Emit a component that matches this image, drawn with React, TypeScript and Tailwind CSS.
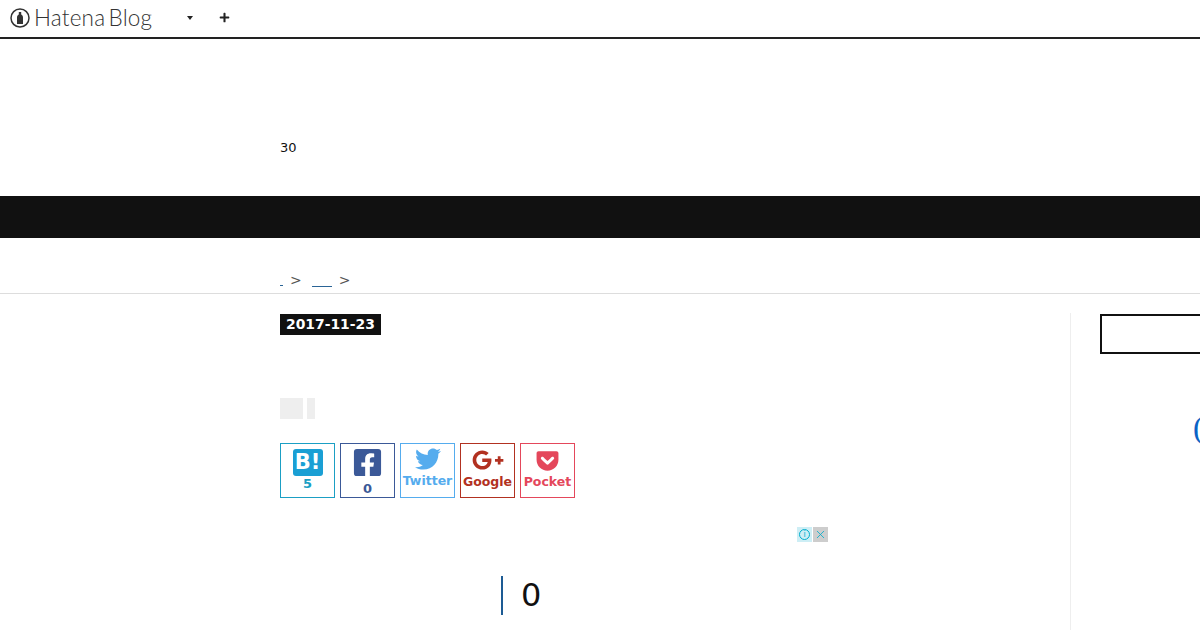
import { FaFacebookSquare, FaGetPocket, FaGooglePlusG, FaPlus, FaTwitter } from "react-icons/fa";
import { X } from "lucide-react";

const ShareButton = ({ className, labelClass, icon, label }: { className: string; labelClass: string; icon: React.ReactNode; label: string }) => (
  <div className={`flex h-[55px] w-[55px] flex-col items-center border font-bold ${className}`}>
    {icon}
    <span className={`leading-[15px] ${labelClass}`}>{label}</span>
  </div>
);

const App = () => {
  return (
    <div className="h-[630px] w-[1200px] overflow-hidden bg-white font-['DejaVu_Sans',sans-serif] text-[#111]">
      <header className="flex h-[39px] items-center border-b-2 border-[#222] pb-[2px] pl-[10px]">
        <svg width="20" height="20" viewBox="0 0 20 20" className="text-[#333]">
          <circle cx="10" cy="10" r="9" fill="none" stroke="currentColor" strokeWidth="1.5" />
          <path d="M8.800 4h2.400v2.400c1.200.8 1.800 1.700 1.800 3V16H7V9.400c0-1.300.6-2.200 1.800-3z" fill="currentColor" />
        </svg>
        <span className="ml-[4px] w-[118px] whitespace-nowrap font-['Lato',sans-serif] text-[22.5px] font-light tracking-[0.2px] text-[#333] [word-spacing:-3px]">Hatena Blog</span>
        <svg width="6" height="4" viewBox="0 0 6 4" className="ml-[35px] mt-[1px]">
          <path d="M0 0h6L3 4z" fill="#222" />
        </svg>
        <FaPlus className="ml-[26px] text-[11px] text-[#222]" />
      </header>

      <div className="h-[157px] pl-[280px] pt-[100px] text-[13px] leading-[17px]">30</div>
      <div className="h-[42px] bg-[#111]" />

      <nav className="flex h-[56px] items-start border-b border-[#ddd] pl-[280px] pt-[33px] text-[14px] leading-[18px] text-[#555]">
        <span className="mt-[14px] h-[1px] w-[3px] bg-[#2a6496]" />
        <span className="ml-[7px]">&gt;</span>
        <span className="ml-[10px] mt-[15px] h-[1px] w-[20px] bg-[#2a6496]" />
        <span className="ml-[7px]">&gt;</span>
      </nav>

      <main className="flex pt-[19px]">
        <div className="ml-[280px] w-[790px] shrink-0 pt-[1px]">
          <div className="w-fit bg-[#111] px-[6px] text-[13.9px] font-bold leading-[21px] text-white">2017-11-23</div>

          <div className="mt-[63px] flex gap-[4px]">
            <div className="h-[21px] w-[23px] bg-[#eee]" />
            <div className="h-[21px] w-[8px] bg-[#eee]" />
          </div>

          <div className="mt-[24px] flex gap-[5px]">
            <ShareButton
              className="border-[#1b9fc4] pt-[5px] text-[#1b9fc4]"
              labelClass="text-[13px]"
              icon={
                <div className="flex h-[27px] w-[30px] items-center justify-center rounded-[3px] bg-[#1a9fd4] text-[21px] font-bold leading-none text-white">B!</div>
              }
              label="5"
            />
            <ShareButton
              className="border-[#3b5998] pt-[3px] text-[#3b5998]"
              labelClass="mt-[3px] text-[13px]"
              icon={<FaFacebookSquare className="text-[31px] text-[#3b5998]" />}
              label="0"
            />
            <ShareButton
              className="border-[#55acee] pt-[2px] text-[#55acee]"
              labelClass="mt-[1px] text-[12.5px]"
              icon={<FaTwitter className="text-[26px]" />}
              label="Twitter"
            />
            <ShareButton
              className="border-[#b23121] text-[#b23121]"
              labelClass="-mt-[2px] text-[12.5px]"
              icon={<FaGooglePlusG className="text-[32px]" />}
              label="Google"
            />
            <ShareButton
              className="border-[#e4475b] pt-[4px] text-[#e4475b]"
              labelClass="mt-[1px] text-[12.5px]"
              icon={<FaGetPocket className="text-[25px]" />}
              label="Pocket"
            />
          </div>

          <div className="ml-[517px] mt-[29px] flex h-[15px] w-[31px] gap-[1px]">
            <div className="flex h-[15px] w-[15px] items-center justify-center bg-[#cdeef5]">
              <span className="flex h-[11px] w-[11px] items-center justify-center rounded-full border border-[#00aecd] text-[8px] leading-none text-[#00aecd]">i</span>
            </div>
            <div className="flex h-[15px] w-[15px] items-center justify-center bg-[#cdcdcd]">
              <X size={13} strokeWidth={1.5} className="text-[#00aecd]" />
            </div>
          </div>

          <div className="ml-[221px] mt-[34px] flex h-[39px] items-center border-l-2 border-[#1d5b94] pb-[2px] pl-[18px] text-[32px]">0</div>
        </div>

        <aside className="h-[330px] w-[400px] shrink-0 border-l border-[#eee] pl-[29px] pt-[1px]">
          <div className="h-[40px] w-[300px] border-2 border-[#111]" />
          <div className="ml-[93px] mt-[55px] font-['Liberation_Serif',serif] text-[32px] leading-[36px] text-[#0b63c5]">(</div>
        </aside>
      </main>
    </div>
  );
};

export default App;
